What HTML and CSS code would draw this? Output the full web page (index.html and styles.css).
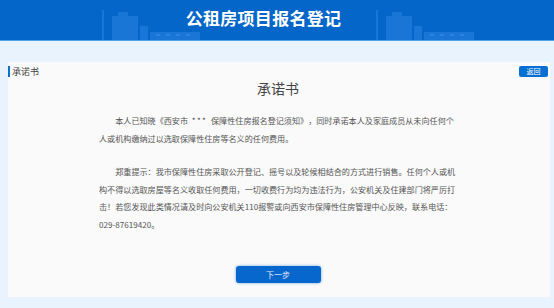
FILE: index.html
```html
<!DOCTYPE html>
<html lang="zh-CN">
<head>
    <meta charset="UTF-8">
    <meta name="viewport" content="width=device-width, initial-scale=1.0">
    <title>公租房项目报名登记</title>
    <link rel="stylesheet" href="styles.css">
</head>
<body>
    <div class="header">
        <svg class="skyline" width="554" height="40" viewBox="0 0 554 40">
            <g fill="#1a76d6">
                <rect x="102" y="10" width="2" height="30"/>
                <rect x="112" y="16" width="26" height="24"/>
                <rect x="118" y="12" width="10" height="4"/>
                <rect x="140" y="26" width="8" height="14"/>
                <rect x="150" y="32" width="50" height="8"/>
                <rect x="376" y="10" width="2" height="30"/>
                <rect x="386" y="16" width="26" height="24"/>
                <rect x="392" y="12" width="10" height="4"/>
                <rect x="414" y="26" width="8" height="14"/>
                <rect x="424" y="32" width="50" height="8"/>
            </g>
            <g fill="#2a84e0">
                <rect x="156" y="34" width="4" height="2"/>
                <rect x="166" y="34" width="4" height="2"/>
                <rect x="176" y="34" width="4" height="2"/>
                <rect x="186" y="34" width="4" height="2"/>
                <rect x="430" y="34" width="4" height="2"/>
                <rect x="440" y="34" width="4" height="2"/>
                <rect x="450" y="34" width="4" height="2"/>
                <rect x="460" y="34" width="4" height="2"/>
            </g>
        </svg>
        <h1 class="title">公租房项目报名登记</h1>
    </div>

    <div class="main">
        <div class="card">
            <div class="card-top">
                <span class="card-label">承诺书</span>
                <button class="back-btn">返回</button>
            </div>
            <h2 class="card-title">承诺书</h2>
            <div class="content">
                <p>本人已知晓《西安市 <span class="mask">***</span> 保障性住房报名登记须知》，同时承诺本人及家庭成员从未向任何个人或机构缴纳过以选取保障性住房等名义的任何费用。</p>
                <p>郑重提示：我市保障性住房采取公开登记、摇号以及轮候相结合的方式进行销售。任何个人或机构不得以选取房屋等名义收取任何费用，一切收费行为均为违法行为，公安机关及住建部门将严厉打击！若您发现此类情况请及时向公安机关110报警或向西安市保障性住房管理中心反映，联系电话：<span class="phone">029-87619420。</span></p>
            </div>
            <div class="actions">
                <button class="next-btn">下一步</button>
            </div>
        </div>
    </div>
</body>
</html>
```

FILE: styles.css
```css
body {
    margin: 0;
    background: #e9f3fd;
    font-family: "Noto Sans CJK SC", "Liberation Sans", sans-serif;
    color: #444;
}
.header {
    position: relative;
    height: 40px;
    background: #0466c8;
    border-bottom: 1px solid #4fa3ea;
    display: flex;
    align-items: center;
    justify-content: center;
}
.skyline {
    position: absolute;
    left: 0;
    top: 0;
}
.title {
    position: relative;
    margin: 0 27px 6px 0;
    font-size: 17px;
    font-weight: bold;
    color: #fff;
    letter-spacing: 0.3px;
}
.main {
    padding: 21px 4px 10px 8px;
}
.card {
    background: #fafafa;
    padding: 4px 2px 14px 0;
}
.card-top {
    display: flex;
    justify-content: space-between;
    align-items: center;
    height: 11px;
}
.card-label {
    font-size: 9px;
    line-height: 11px;
    color: #444;
    border-left: 2px solid #0b6fcf;
    padding-left: 2px;
}
.back-btn {
    width: 29px;
    height: 11px;
    padding: 0;
    border: none;
    border-radius: 2px;
    background: #0a6fd2;
    color: #fff;
    font-family: inherit;
    font-size: 7px;
    line-height: 11px;
}
.card-title {
    margin: 1px 0 0;
    text-align: center;
    font-size: 14px;
    line-height: 20px;
    font-weight: normal;
    color: #444;
}
.content {
    width: 358px;
    margin: 14px auto 0;
    font-size: 8.1px;
    line-height: 17.5px;
    color: #555;
    text-spacing-trim: space-all;
}
.content p {
    margin: 0 0 16px;
    text-indent: 2em;
}
.content p:last-child {
    margin-bottom: 0;
}
.mask {
    padding: 0 2px;
    letter-spacing: 1.33px;
}
.phone {
    white-space: nowrap;
}
.actions {
    display: flex;
    justify-content: center;
    margin-top: 33px;
}
.next-btn {
    width: 85px;
    height: 17px;
    padding: 0;
    border: none;
    border-radius: 3px;
    background: #0867cc;
    box-shadow: 0 0 3px rgba(8, 103, 204, 0.6);
    color: #e8eefa;
    font-family: inherit;
    font-size: 8px;
}
```
